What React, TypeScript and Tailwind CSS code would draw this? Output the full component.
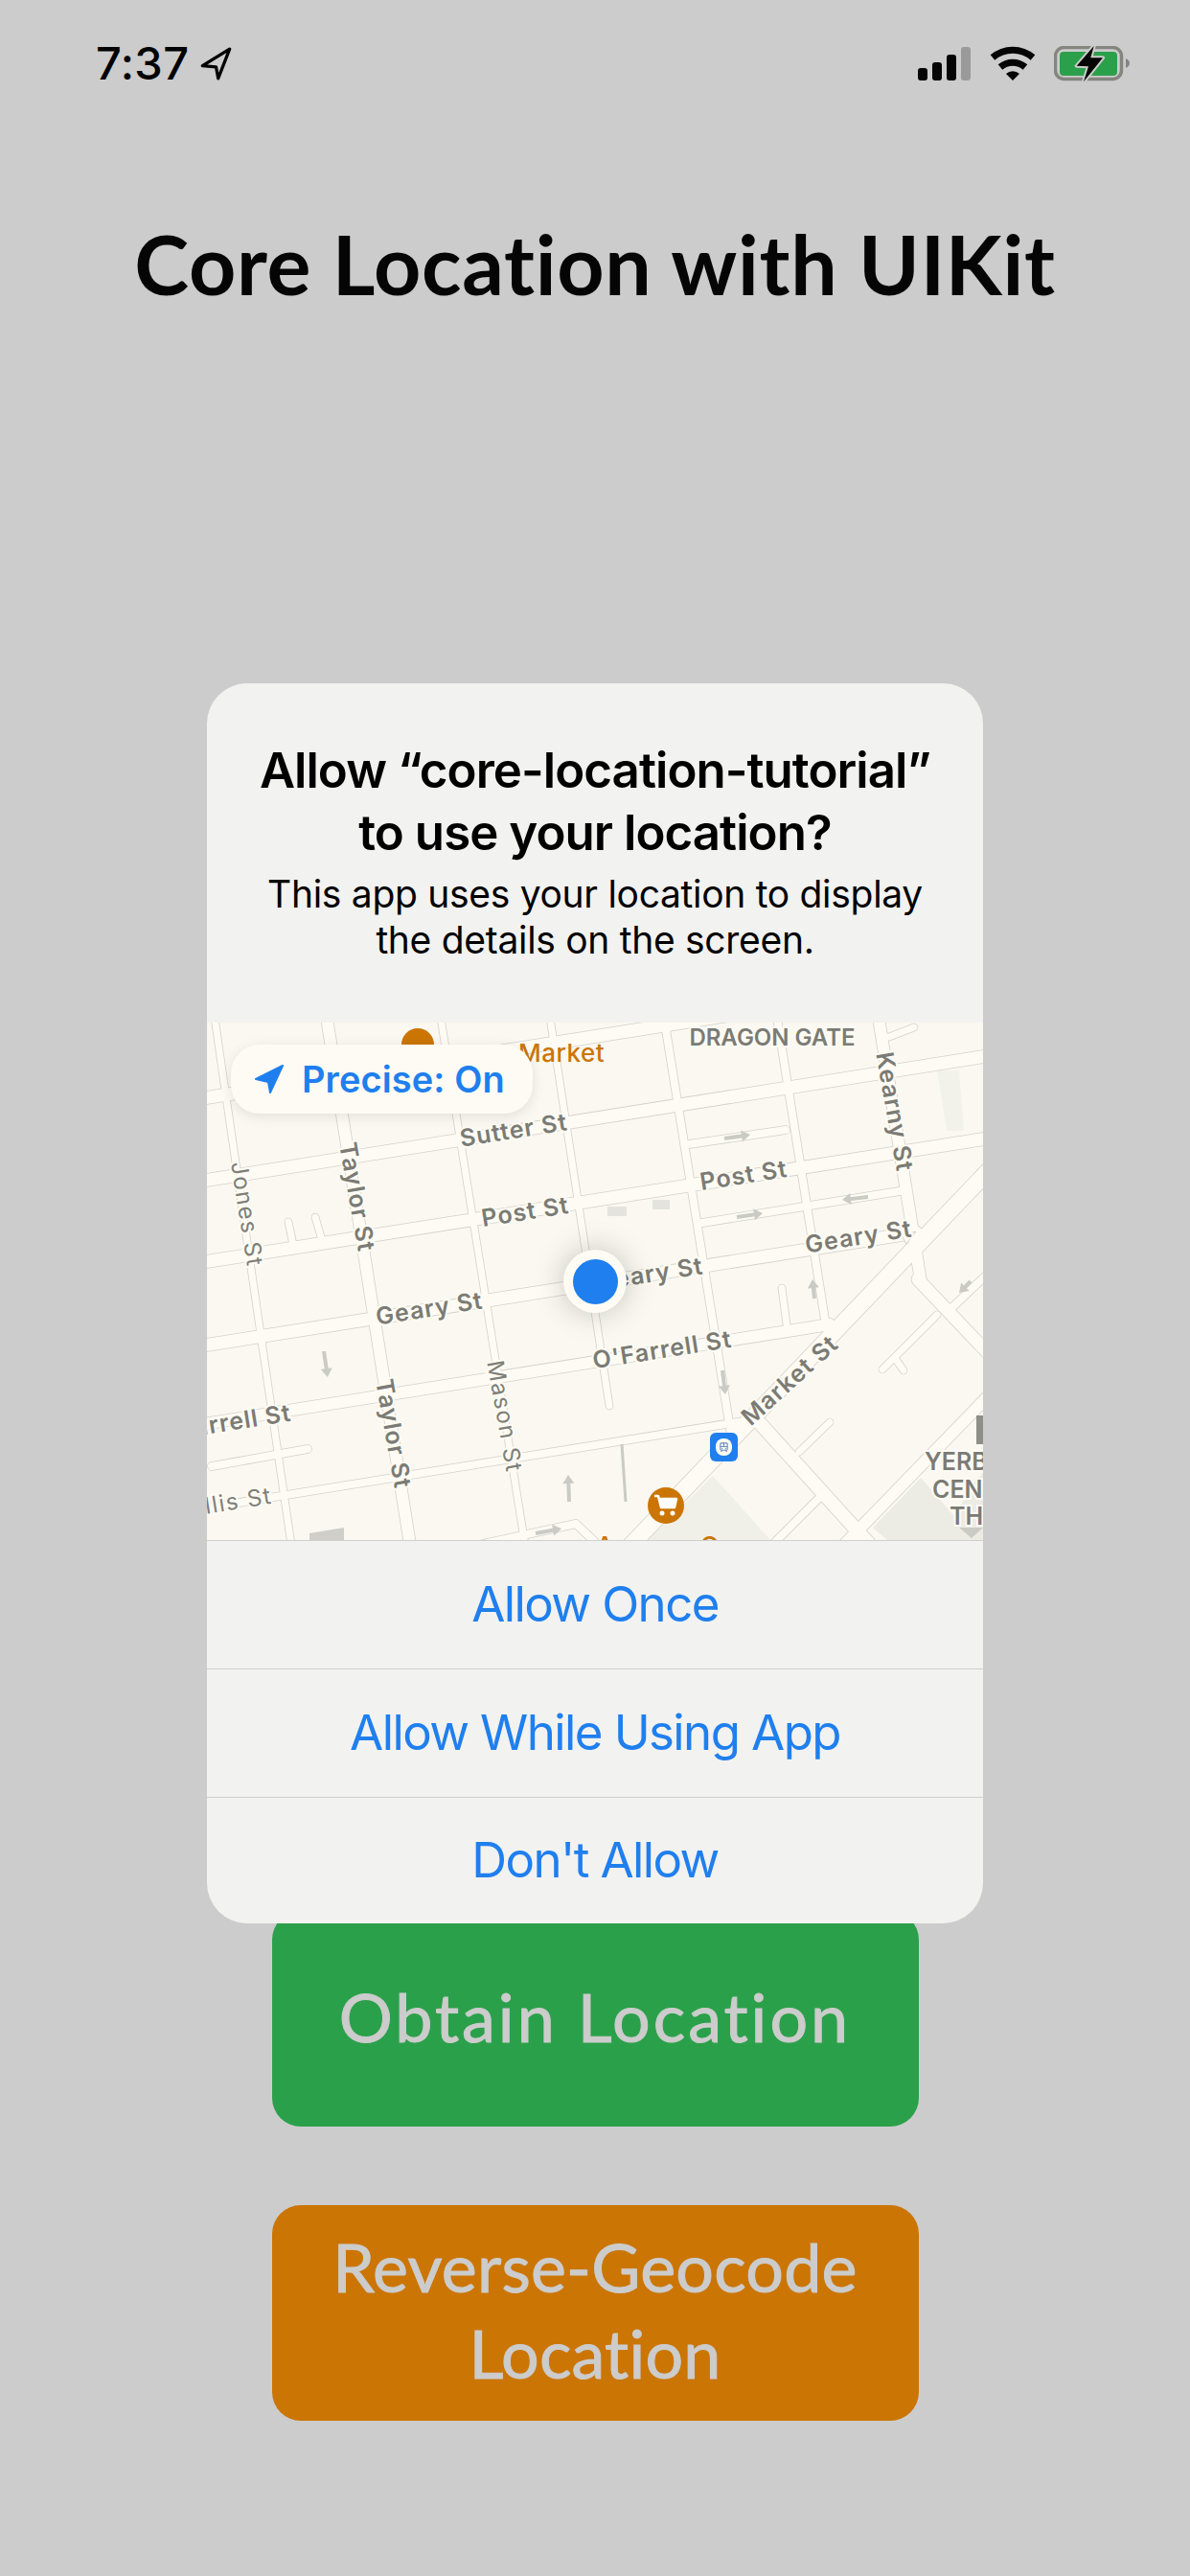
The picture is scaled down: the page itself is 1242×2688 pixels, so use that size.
import { TramFront } from 'lucide-react';

type Road = [number, number, number, number, number];

const roads: Road[] = [
  // cross streets
  [-10, 80, 560, -10, 13],
  [-10, 166, 820, 34, 13],
  [-10, 251, 820, 120, 13],
  [-10, 338, 740, 219, 13],
  [-10, 420, 650, 315, 12],
  [-10, 508, 560, 416, 8],
  [5, 463, 105, 445, 8],
  [517, 209, 723, 176, 8],
  [503, 127, 604, 112, 8],
  [270, 548, 385, 523, 8],
  [385, 523, 405, 542, 8],
  [712, 15, 738, 5, 7],
  // avenues
  [8, -5, 88, 545, 7],
  [125, -5, 212, 545, 12],
  [244, -5, 332, 545, 7],
  [358, -5, 420, 400, 7],
  [477, -5, 547, 430, 8],
  [595, -5, 645, 310, 8],
  [701, -5, 745, 270, 12],
  // diagonals
  [440, 548, 820, 150, 17],
  [577, 418, 692, 545, 14],
  [618, 448, 650, 417, 7],
  [590, 545, 640, 495, 8],
  [660, 550, 820, 385, 12],
  [742, 268, 820, 350, 13],
  [775, 300, 815, 262, 8],
  [762, 305, 712, 355, 7],
  [712, 355, 705, 362, 7],
  [718, 350, 727, 363, 7],
  // stubs
  [85, 208, 90, 232, 7],
  [113, 203, 120, 227, 7],
  [600, 277, 605, 315, 7],
];

const arrows: [number, number, number, number][] = [
  [540, 121, 567, 117],
  [553, 203, 580, 199],
  [690, 182, 663, 185],
  [122, 343, 126, 370],
  [378, 500, 377, 472],
  [343, 533, 370, 528],
  [538, 363, 541, 388],
  [634, 288, 632, 268],
  [797, 270, 785, 282],
];

const labels = [
  { text: 'Sutter St', x: 320, y: 112, r: -9 },
  { text: 'Post St', x: 332, y: 197, r: -9 },
  { text: 'Post St', x: 560, y: 159, r: -9 },
  { text: 'Geary St', x: 680, y: 223, r: -9 },
  { text: 'Geary St', x: 462, y: 262, r: -9 },
  { text: 'Geary St', x: 232, y: 298, r: -9 },
  { text: "O'Farrell St", x: 475, y: 341, r: -9 },
  { text: "O'Farrell St", x: 15, y: 418, r: -9 },
  { text: 'Taylor St', x: 157, y: 182, r: 80 },
  { text: 'Taylor St', x: 195, y: 429, r: 80 },
  { text: 'Kearny St', x: 718, y: 93, r: 80 },
  { text: 'Market St', x: 608, y: 373, r: -42 },
];

const thinLabels = [
  { text: 'Jones St', x: 42, y: 200, r: 81 },
  { text: 'Mason St', x: 311, y: 411, r: 80 },
  { text: 'Ellis St', x: 25, y: 500, r: -9 },
];

function OneWay({ a }: { a: [number, number, number, number] }) {
  const [x1, y1, x2, y2] = a;
  const angle = (Math.atan2(y2 - y1, x2 - x1) * 180) / Math.PI;
  const len = Math.hypot(x2 - x1, y2 - y1);
  return (
    <g transform={`translate(${x1} ${y1}) rotate(${angle})`}>
      <rect x={0} y={-2} width={len - 8} height={4} fill="#cbcbc6" />
      <polygon points={`${len - 9},-6 ${len},0 ${len - 9},6`} fill="#cbcbc6" />
    </g>
  );
}

function MapArt() {
  return (
    <svg viewBox="0 0 810 540" className="block h-[540px] w-[810px]">
      <rect width={810} height={540} fill="#faf8f1" />
      <polygon points="528,473 588,540 460,540" fill="#f0efe8" />
      <polygon points="695,527 745,475 780,515 800,480 810,470 810,540 710,540" fill="#ecebe4" />
      <polygon points="762,50 785,50 790,113 772,113" fill="#f3f2ea" />
      {roads.map((r, i) => (
        <line key={i} x1={r[0]} y1={r[1]} x2={r[2]} y2={r[3]} stroke="#d3d2cd" strokeWidth={r[4] + 1.6} strokeLinecap="round" />
      ))}
      {roads.map((r, i) => (
        <line key={i} x1={r[0]} y1={r[1]} x2={r[2]} y2={r[3]} stroke="#fdfbf3" strokeWidth={r[4]} strokeLinecap="round" />
      ))}
      <polygon points="725,222 740,218 730,231" fill="#fdfbf3" stroke="#d3d2cd" strokeWidth={1} />
      <rect x={418} y={192} width={20} height={10} fill="#e4e3dd" />
      <rect x={465} y={185} width={18} height={10} fill="#e4e3dd" />
      <polygon points="107,533 143,527 143,540 107,540" fill="#cfcec9" />
      <line x1={433} y1={440} x2={437} y2={500} stroke="#cbcbc6" strokeWidth={3} />
      {arrows.map((a, i) => (
        <OneWay key={i} a={a} />
      ))}
      <rect x={803} y={410} width={7} height={30} fill="#8f8f89" />
      <polygon points="785,527 810,527 798,538" fill="#cbcbc6" />

      <circle cx={220} cy={23} r={17} fill="#cb7505" />
      <text x={325} y={41} className="fill-[#cb7505] font-['Inter'] text-[26px] font-medium tracking-[0.5px]">
        Market
      </text>
      <text x={406} y={555} className="fill-[#cb7505] font-['Inter'] text-[26px] font-medium">
        Amazon Go
      </text>

      {labels.map((l) => (
        <text
          key={`${l.text}${l.x}`}
          transform={`translate(${l.x} ${l.y}) rotate(${l.r})`}
          textAnchor="middle"
          dominantBaseline="central"
          stroke="#fdfbf3"
          strokeWidth={4}
          paintOrder="stroke"
          className="fill-[#7b7b75] font-['Inter'] text-[25px] font-semibold tracking-[1px]"
        >
          {l.text}
        </text>
      ))}
      {thinLabels.map((l) => (
        <text
          key={l.text}
          transform={`translate(${l.x} ${l.y}) rotate(${l.r})`}
          textAnchor="middle"
          dominantBaseline="central"
          stroke="#fdfbf3"
          strokeWidth={4}
          paintOrder="stroke"
          className="fill-[#7f7f79] font-['Inter'] text-[24px] tracking-[1.5px]"
        >
          {l.text}
        </text>
      ))}
      <text x={590} y={24} textAnchor="middle" stroke="#fdfbf3" strokeWidth={4} paintOrder="stroke" className="fill-[#7b7b75] font-['Inter'] text-[24px] font-semibold">
        DRAGON GATE
      </text>
      <g stroke="#fdfbf3" strokeWidth={4} paintOrder="stroke" className="fill-[#7b7b75] font-['Inter'] text-[25px] font-semibold">
        <text x={749} y={467}>YERB</text>
        <text x={757} y={496}>CENT</text>
        <text x={775} y={524}>TH</text>
      </g>

      <rect x={525} y={428} width={29} height={30} rx={6} fill="#1f7fee" />
      <rect x={531} y={434} width={17} height={18} rx={8} fill="#fdfbf3" />
      <TramFront x={534} y={437} width={11} height={12} color="#6d8fc0" strokeWidth={2.5} />

      <circle cx={479} cy={504} r={19} fill="#cb7505" />
      <path d="M467 494h4l3 12h14l2-9h-18" fill="none" stroke="#fff" strokeWidth={2.5} strokeLinejoin="round" />
      <path d="M472 497h17l-2 9h-13z" fill="#fff" />
      <circle cx={475} cy={512} r={2.5} fill="#fff" />
      <circle cx={486} cy={512} r={2.5} fill="#fff" />
    </svg>
  );
}

function StatusBar() {
  return (
    <div className="flex h-[134px] items-start justify-between pl-[100px] pr-[62px] pt-[38px]">
      <div className="flex items-center gap-[12px]">
        <span className="font-['Inter'] text-[47px] leading-[56px] font-medium tracking-[0.4px] text-black">7:37</span>
        <svg viewBox="0 0 30 32" className="h-[35px] w-[33px]">
          <path d="M28 2 2 18l13 1 2 11z" fill="none" stroke="#000" strokeWidth={3} strokeLinejoin="round" />
        </svg>
      </div>
      <div className="mt-[10px] flex items-start">
        <div className="mt-[1px] flex h-[35px] items-end gap-[5px]">
          <div className="h-[13px] w-[10px] rounded-[3px] bg-[#050505]" />
          <div className="h-[19px] w-[10px] rounded-[3px] bg-[#050505]" />
          <div className="h-[27px] w-[10px] rounded-[3px] bg-[#050505]" />
          <div className="h-[35px] w-[10px] rounded-[3px] bg-[#9a9a9a]" />
        </div>
        <svg viewBox="0 0 48 36" className="ml-[20px] h-[36px] w-[48px]">
          <path d="M3 12A32 32 0 0 1 45 12" fill="none" stroke="#050505" strokeWidth={7} />
          <path d="M11 22A20 20 0 0 1 37 22" fill="none" stroke="#050505" strokeWidth={7} />
          <path d="M17 29a10 10 0 0 1 14 0l-7 7z" fill="#050505" />
        </svg>
        <svg viewBox="0 0 80 38" className="ml-[19px] h-[38px] w-[80px]">
          <rect x={1.5} y={1.5} width={69} height={33} rx={9} fill="none" stroke="#85857f" strokeWidth={3.5} />
          <rect x={6} y={6} width={60} height={25} rx={4} fill="#2ba04a" />
          <path d="M75 13q4 2 4 5t-4 5z" fill="#85857f" />
          <path
            d="M41.7 0 23.7 20.7 36 21.3 31 37.3 51 12.3 38.3 12.3z"
            fill="#050505"
            stroke="#cccccc"
            strokeWidth={4}
            paintOrder="stroke"
            strokeLinejoin="round"
          />
        </svg>
      </div>
    </div>
  );
}

function AlertButton({ label, bottom }: { label: string; bottom?: boolean }) {
  return (
    <div
      className={`flex items-center justify-center border-t border-[#cfcfcd] font-['Inter'] text-[51px] tracking-[-1.6px] text-[#1f7fee] ${bottom ? 'h-[132px]' : 'h-[134px]'}`}
    >
      {label}
    </div>
  );
}

function LocationAlert() {
  return (
    <div className="absolute top-[713px] left-[216px] w-[810px] overflow-hidden rounded-[42px] bg-[#f2f2f0]">
      <div className="h-[354px] pt-[58px] text-center font-['Inter'] text-black">
        <div className="text-[51px] leading-[65px] font-semibold tracking-[-0.95px]">
          Allow “core-location-tutorial”
          <br />
          to use your location?
        </div>
        <div className="mt-[8px] text-[39px] leading-[48px] tracking-[-0.3px]">
          This app uses your location to display
          <br />
          the details on the screen.
        </div>
      </div>
      <div className="relative h-[540px]">
        <MapArt />
        <div className="absolute top-[23px] left-[25px] flex h-[72px] w-[315px] items-center gap-[19px] rounded-[30px] bg-[#fdfbf3] pl-[25px] shadow-[0_3px_14px_rgba(0,0,0,0.1)]">
          <svg viewBox="0 0 30 30" className="h-[30px] w-[30px]">
            <path d="M29 1 1 15l13 3 2 11z" fill="#1f7fee" stroke="#1f7fee" strokeWidth={2} strokeLinejoin="round" />
          </svg>
          <span className="font-['Inter'] text-[38px] leading-none font-semibold tracking-[0.1px] text-[#1f7fee]">Precise: On</span>
        </div>
        <div className="absolute top-[237px] left-[372px] flex h-[66px] w-[66px] items-center justify-center rounded-full bg-[#fdfbf3] shadow-[0_0_32px_rgba(0,0,0,0.22)]">
          <div className="h-[47px] w-[47px] rounded-full bg-[#1f7fee]" />
        </div>
      </div>
      <AlertButton label="Allow Once" />
      <AlertButton label="Allow While Using App" />
      <AlertButton label="Don't Allow" bottom />
    </div>
  );
}

export default function App() {
  return (
    <div className="relative h-[2688px] w-[1242px] overflow-hidden bg-[#cccccc]">
      <StatusBar />
      <h1 className="mt-[91px] text-center font-['Lato'] text-[86px] leading-[100px] font-bold tracking-[0.7px] text-[#050505]">Core Location with UIKit</h1>
      <div className="mt-[1669px] flex flex-col items-center gap-[82px] font-['Lato'] text-[70px] leading-[90px] text-[#cccccc] [-webkit-text-stroke:1px_#cccccc]">
        <div className="flex h-[225px] w-[675px] items-center justify-center rounded-[30px] bg-[#2ba04a] pb-[6px] tracking-[3px]">Obtain Location</div>
        <div className="flex h-[225px] w-[675px] items-center justify-center rounded-[30px] bg-[#cb7505] pb-[8px] text-center tracking-[0.2px]">
          Reverse-Geocode
          <br />
          Location
        </div>
      </div>
      <LocationAlert />
    </div>
  );
}
